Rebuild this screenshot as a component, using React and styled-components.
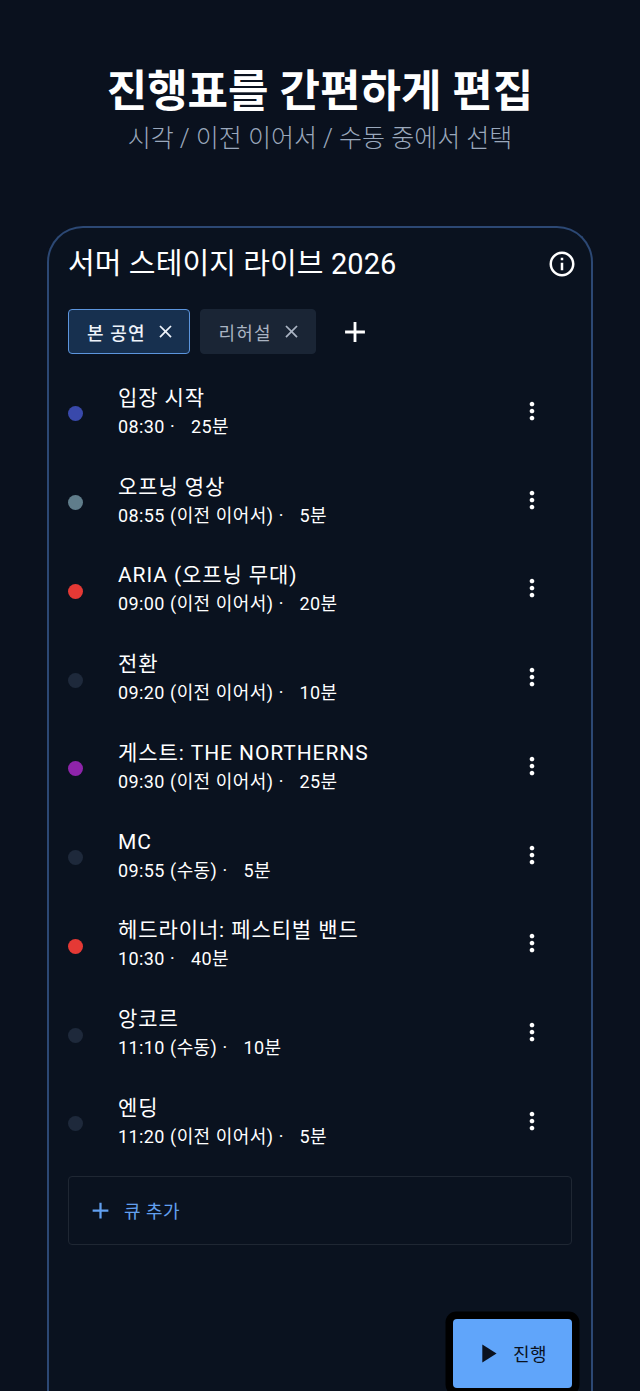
import styled, { createGlobalStyle } from 'styled-components'
import { MdInfoOutline, MdAdd, MdClose, MdMoreVert, MdPlayArrow } from 'react-icons/md'

const GlobalStyle = createGlobalStyle`
  html, body {
    margin: 0;
    height: 1391px;
    overflow: hidden;
    background: #0a111e;
  }
  body, button {
    font-family: Roboto, "Noto Sans CJK KR", sans-serif;
  }
`

const Page = styled.div`
  height: 1391px;
  overflow: hidden;
  display: flex;
  flex-direction: column;
  align-items: center;
  background: #0a111e;
`

const Title = styled.h1`
  margin: 64px 0 0;
  font-size: 44px;
  line-height: 56px;
  font-weight: 700;
  color: #fff;
`

const Subtitle = styled.p`
  margin: 0;
  font-size: 25px;
  line-height: 38px;
  font-weight: 300;
  color: #9aa8bc;
`

const Card = styled.section`
  box-sizing: border-box;
  width: 546px;
  flex: 1;
  margin-top: 68px;
  padding: 18px 19px 0;
  border: 2px solid #2c4874;
  border-bottom: 0;
  border-radius: 36px 36px 0 0;
  background: #0a121f;
`

const CardHeader = styled.div`
  display: flex;
  align-items: center;
  justify-content: space-between;
  height: 36px;
`

const CardTitle = styled.h2`
  margin: 0;
  font-size: 29px;
  line-height: 36px;
  font-weight: 400;
  letter-spacing: 0.1px;
  color: #fff;
`

const InfoButton = styled.span`
  display: flex;
  margin-right: -5px;
  color: #fff;
`

const Tabs = styled.div`
  display: flex;
  align-items: center;
  gap: 10px;
  margin-top: 27px;
`

const Tab = styled.div`
  box-sizing: border-box;
  height: 45px;
  display: flex;
  align-items: center;
  gap: 9px;
  padding: 0 13px 0 18px;
  border-radius: 4px;
  font-size: 18px;
  letter-spacing: 1.1px;
  font-weight: ${p => (p.$active ? 500 : 400)};
  color: ${p => (p.$active ? '#eef3fa' : '#aab4c3')};
  background: ${p => (p.$active ? '#17304f' : '#1a2535')};
  border: 1px solid ${p => (p.$active ? '#5c95dd' : '#1a2535')};
`

const AddTab = styled.span`
  display: flex;
  margin-left: 12px;
  color: #fff;
`

const CueList = styled.ul`
  list-style: none;
  margin: 15.4px 0 0;
  padding: 0;
`

const CueRow = styled.li`
  height: 88.75px;
  display: flex;
  align-items: center;
`

const Dot = styled.span`
  width: 15px;
  height: 15px;
  margin-right: 35px;
  border-radius: 50%;
  background: ${p => p.$color};
`

const CueText = styled.div`
  flex: 1;
  margin-bottom: 5px;
  color: #fff;
`

const CueName = styled.div`
  font-size: 21px;
  line-height: 31px;
  letter-spacing: 0.9px;
`

const CueMeta = styled.div`
  font-size: 18px;
  line-height: 26px;
  letter-spacing: 0.4px;
  word-spacing: 0.4px;
  white-space: pre;
`

const MoreButton = styled.span`
  display: flex;
  margin: 0 26px 6px 0;
  color: #fff;
`

const AddCue = styled.div`
  box-sizing: border-box;
  height: 69px;
  margin-top: 7.6px;
  display: flex;
  align-items: center;
  gap: 10px;
  padding-left: 18px;
  border: 1px solid #1f2733;
  border-radius: 4px;
  font-size: 18px;
  letter-spacing: 0.5px;
  color: #62a0f0;
`

const Actions = styled.div`
  display: flex;
  justify-content: flex-end;
  margin-top: 74px;
`

const RunButton = styled.div`
  box-sizing: border-box;
  width: 119px;
  height: 69px;
  display: flex;
  align-items: center;
  justify-content: center;
  gap: 10px;
  padding-right: 6px;
  border-radius: 4px;
  box-shadow: 0 0 0 7.5px #000;
  background: #60a5fa;
  font-size: 18px;
  letter-spacing: 0.5px;
  color: #0a111e;
`

const cues = [
  { name: '입장 시작', meta: '08:30 ·   25분', color: '#3949ab' },
  { name: '오프닝 영상', meta: '08:55 (이전 이어서) ·   5분', color: '#607d8b' },
  { name: 'ARIA (오프닝 무대)', meta: '09:00 (이전 이어서) ·   20분', color: '#e53935' },
  { name: '전환', meta: '09:20 (이전 이어서) ·   10분', color: '#1e293b' },
  { name: '게스트: THE NORTHERNS', meta: '09:30 (이전 이어서) ·   25분', color: '#8e24aa' },
  { name: 'MC', meta: '09:55 (수동) ·   5분', color: '#1e293b' },
  { name: '헤드라이너: 페스티벌 밴드', meta: '10:30 ·   40분', color: '#e53935' },
  { name: '앙코르', meta: '11:10 (수동) ·   10분', color: '#1e293b' },
  { name: '엔딩', meta: '11:20 (이전 이어서) ·   5분', color: '#1e293b' },
]

export default function App() {
  return (
    <Page>
      <GlobalStyle />
      <Title>진행표를 간편하게 편집</Title>
      <Subtitle>시각 / 이전 이어서 / 수동 중에서 선택</Subtitle>
      <Card>
        <CardHeader>
          <CardTitle>서머 스테이지 라이브 2026</CardTitle>
          <InfoButton><MdInfoOutline size={30} /></InfoButton>
        </CardHeader>
        <Tabs>
          <Tab $active>본 공연 <MdClose size={21} /></Tab>
          <Tab>리허설 <MdClose size={21} /></Tab>
          <AddTab><MdAdd size={34} /></AddTab>
        </Tabs>
        <CueList>
          {cues.map(cue => (
            <CueRow key={cue.name}>
              <Dot $color={cue.color} />
              <CueText>
                <CueName>{cue.name}</CueName>
                <CueMeta>{cue.meta}</CueMeta>
              </CueText>
              <MoreButton><MdMoreVert size={28} /></MoreButton>
            </CueRow>
          ))}
        </CueList>
        <AddCue><MdAdd size={27} /> 큐 추가</AddCue>
        <Actions>
          <RunButton><MdPlayArrow size={31} /> 진행</RunButton>
        </Actions>
      </Card>
    </Page>
  )
}
